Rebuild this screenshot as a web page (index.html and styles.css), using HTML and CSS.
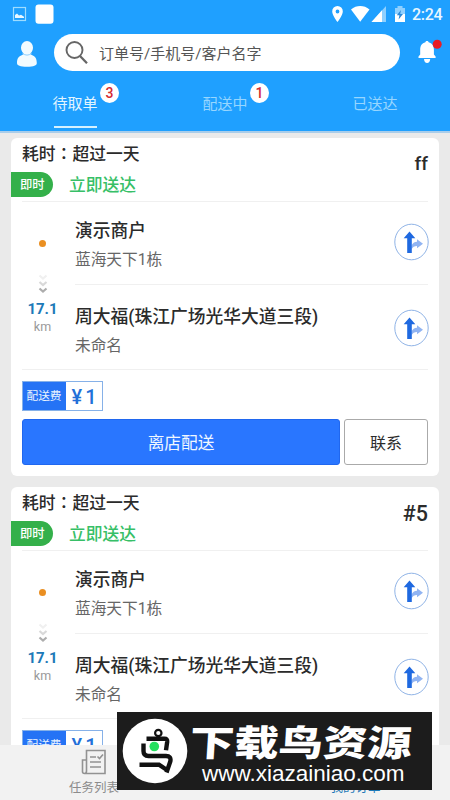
FILE: index.html
```html
<!DOCTYPE html>
<html lang="zh-CN">
<head>
<meta charset="utf-8">
<title>待取单</title>
<link rel="stylesheet" href="styles.css">
</head>
<body>
<svg width="0" height="0" class="defs">
  <symbol id="route" viewBox="0 0 36 38">
    <ellipse cx="17.500" cy="19" rx="16.7" ry="17.8" fill="#fff" stroke="#8fb3e6" stroke-width="1"/>
    <path d="M17.500 26.500V23c1-3 3-4 5.500-4.200v-2.600l6 4.600-6 4.400v-2.300c-2.500 0-4.500 1-5.500 3.600z" fill="#91b4f2"/>
    <path d="M15.500 8.500l5.800 6.700h-3.500v14.700h-4.600V15.200H9.700z" fill="#1f69e0"/>
  </symbol>
  <symbol id="chevs" viewBox="0 0 10 24">
    <g fill="none" stroke-width="2.200">
      <path d="M1.500 1.500L5 4.500l3.500-3" stroke="#f0f0f0"/>
      <path d="M1.500 8L5 11l3.500-3" stroke="#d9d9d9"/>
      <path d="M1.500 14.500L5 17.500l3.500-3" stroke="#adadad"/>
    </g>
  </symbol>
</svg>
<div class="screen">
  <header class="top">
    <div class="status">
      <svg width="56" height="26" viewBox="0 0 56 26">
        <rect x="13.500" y="7.500" width="12" height="13" fill="none" stroke="#9edcff" stroke-width="1.200"/>
        <path d="M15 18v-3l2-1.500 2 2 2-.8 3 2V18z" fill="#e8f7ff"/>
        <rect x="35.500" y="4.500" width="18" height="19.300" rx="3" fill="#fff"/>
      </svg>
      <svg class="status-right" width="78" height="26" viewBox="330 0 78 26">
        <path fill-rule="evenodd" d="M337.500 6a5.300 5.300 0 0 0-5.300 5.400c0 4 5.300 10.600 5.300 10.600s5.300-6.600 5.300-10.600A5.300 5.300 0 0 0 337.500 6zm0 3.600a1.900 1.900 0 1 1 0 3.800 1.900 1.900 0 0 1 0-3.800z" fill="#fff"/>
        <path d="M351 9.500c5.500-4.600 13-4.600 18.500 0L360.200 21.800z" fill="#fff"/>
        <path d="M386 6v16h-14.500z" fill="#8fd0ff"/><path d="M382 10.300V22h-10.500z" fill="#fff"/>
        <path d="M397.500 6h5v2h2.500v14h-10V8h2.500z" fill="#8fd0ff"/>
        <path d="M395 14h10v8h-10z" fill="#fff"/>
        <path d="M401 10l-4.200 5.300h2.600l-.8 4.200 4.400-5.500h-2.800z" fill="#2b89d8"/>
      </svg>
      <span class="clock">2:24</span>
    </div>
    <div class="searchbar">
      <svg class="user" width="22" height="28" viewBox="0 0 22 28">
        <path d="M11 1a6 6.500 0 0 1 6 6.500c0 2.500-1 4.500-2.500 5.700 0 1 .6 1.500 1.800 2 2.700 1 4.500 3.300 4.500 7.800 0 2.500-3 3.700-9.800 3.700S1 25.500 1 23c0-4.500 1.800-6.800 4.700-7.800 1.200-.5 1.800-1 1.800-2C6 12 5 10 5 7.500A6 6.500 0 0 1 11 1z" fill="#f2fbff"/>
        <path d="M6.500 13.500q4.500 3.200 9 0" fill="none" stroke="#8ccfff" stroke-width="1"/>
      </svg>
      <div class="search">
        <svg width="24" height="25" viewBox="0 0 24 25" fill="none" stroke="#666">
          <circle cx="9.500" cy="10" r="8" stroke-width="1.900"/><path d="M15 16l7 7.200" stroke-width="2.300"/>
        </svg>
        <span>订单号/手机号/客户名字</span>
      </div>
      <svg class="bell" width="26" height="28" viewBox="0 0 26 28">
        <path d="M10 3c.9 0 1.400.5 1.600 1.300 3.600.8 5.300 3.700 5.300 7.200v5l1.700 2v1.500H1.500v-1.500l1.700-2v-5c0-3.500 1.700-6.400 5.200-7.200C8.600 3.500 9.100 3 10 3zM7 21h6.200c-.2 2.800-1.300 4-3.100 4S7.200 23.800 7 21z" fill="#fff"/>
        <circle cx="20.200" cy="6.300" r="4.500" fill="#ea1c24"/>
      </svg>
    </div>
    <nav class="tabs">
      <div class="tab on"><span>待取单</span><i class="badge">3</i></div>
      <div class="tab"><span>配送中</span><i class="badge">1</i></div>
      <div class="tab"><span>已送达</span></div>
    </nav>
  </header>

  <main class="list">
    <article class="card">
      <div class="head">
        <div class="time">耗时<span class="colon" lang="zh-TW">：</span>超过一天</div>
        <div class="instant"><span class="tag">即时</span><span class="now">立即送达</span></div>
        <div class="num">ff</div>
      </div>
      <div class="route">
        <div class="rail">
          <span class="dot"></span>
          <svg class="chev" width="10" height="24"><use href="#chevs"/></svg>
          <b>17.1</b><span class="km">km</span>
        </div>
        <div class="stops">
          <div class="stop"><div><h3>演示商户</h3><p>蓝海天下1栋</p></div><svg width="36" height="38"><use href="#route"/></svg></div>
          <div class="stop"><div><h3>周大福(珠江广场光华大道三段)</h3><p>未命名</p></div><svg width="36" height="38"><use href="#route"/></svg></div>
        </div>
      </div>
      <div class="fee"><span class="fee-label">配送费</span><span class="fee-val">¥<em>1</em></span></div>
      <div class="actions"><button class="go">离店配送</button><button class="call">联系</button></div>
    </article>

    <article class="card">
      <div class="head">
        <div class="time">耗时<span class="colon" lang="zh-TW">：</span>超过一天</div>
        <div class="instant"><span class="tag">即时</span><span class="now">立即送达</span></div>
        <div class="num big">#5</div>
      </div>
      <div class="route">
        <div class="rail">
          <span class="dot"></span>
          <svg class="chev" width="10" height="24"><use href="#chevs"/></svg>
          <b>17.1</b><span class="km">km</span>
        </div>
        <div class="stops">
          <div class="stop"><div><h3>演示商户</h3><p>蓝海天下1栋</p></div><svg width="36" height="38"><use href="#route"/></svg></div>
          <div class="stop"><div><h3>周大福(珠江广场光华大道三段)</h3><p>未命名</p></div><svg width="36" height="38"><use href="#route"/></svg></div>
        </div>
      </div>
      <div class="fee"><span class="fee-label">配送费</span><span class="fee-val">¥<em>1</em></span></div>
    </article>
  </main>

  <footer class="bottom">
    <div class="item">
      <svg width="26" height="26" viewBox="0 0 26 26" fill="none" stroke="#929292" stroke-width="1.600">
        <path d="M5.500 1.500h18.500v23H3.500q-2 0-2-2V11h4zM5.500 11v11q0 2.500-2 2.500"/>
        <path d="M9 8h6M9 13h11M9 18h11"/><path d="M16.500 7.500l2 2 3.500-4"/>
      </svg>
      <span>任务列表</span>
    </div>
    <div class="item on"><span>我的订单</span></div>
  </footer>

  <div class="mark">
    <svg width="66" height="66" viewBox="0 0 66 66">
      <circle cx="33" cy="33" r="32.300" fill="#fff"/>
      <g fill="none" stroke="#111" stroke-width="4.400">
        <circle cx="36.300" cy="15" r="3.200" stroke-width="2.200"/>
        <path d="M24.500 20.800h18q3 0 2.700 3l-1.200 8.500"/>
        <path d="M21.500 25.500V33q0 5 5 5h17.500q5.500 0 4.300 5.500L44.500 54.500"/>
        <path d="M17.500 46.700H37l8 5.300"/>
      </g>
      <circle cx="32.300" cy="28.500" r="4.800" fill="#25e05f"/>
    </svg>
    <div class="mark-text"><strong>下载鸟资源</strong><span>www.xiazainiao.com</span></div>
  </div>
</div>
</body>
</html>
```
FILE: styles.css
```css
* { box-sizing: border-box; margin: 0; padding: 0; }
body {
  font-family: Roboto, "Noto Sans CJK SC", sans-serif;
  color: #2b2b2b;
  background: #eaeaea;
}
.defs { position: absolute; }
svg { display: block; flex: none; }
.screen {
  position: relative;
  width: 450px;
  height: 800px;
  overflow: hidden;
  display: flex;
  flex-direction: column;
}

.top { height: 133px; flex: none; background: #1fa0ff; border-bottom: 2px solid #a9cdea; }
.status { display: flex; align-items: center; height: 28px; padding-right: 9px; }
.status svg { margin-bottom: 2px; }
.status-right { margin-left: auto; }
.clock { width: 29px; margin-left: 4px; font-size: 16px; font-weight: 500; color: #e8f7ff; white-space: nowrap; letter-spacing: -0.3px; }

.searchbar { display: flex; align-items: center; height: 48px; padding-left: 16px; }
.user { margin-top: 3px; }
.search {
  display: flex;
  align-items: center;
  gap: 10.500px;
  width: 346px;
  height: 37px;
  margin-left: 15.500px;
  padding-left: 11px;
  border-radius: 19px;
  background: #fff;
  color: #555;
  font-size: 15px;
}
.bell { margin-left: 17px; }

.tabs { display: flex; padding-top: 13px; }
.tab { position: relative; width: 150px; height: 40px; text-align: center; font-size: 15px; line-height: 31px; color: #97d6ff; }
.tab.on { color: #e2f5ff; }
.tab.on span { display: inline-block; width: 43px; height: 39px; border-bottom: 2px solid #d5f1ff; text-indent: -1px; white-space: nowrap; }
.badge {
  position: absolute;
  left: 100px;
  top: -6px;
  width: 19px;
  height: 20px;
  border-radius: 50%;
  background: #fff;
  color: #d42a31;
  font-size: 14px;
  font-style: normal;
  font-weight: 500;
  line-height: 21px;
}

.list { display: flex; flex-direction: column; gap: 11px; padding: 5px 11px 0; }
.card { height: 338px; flex: none; border-radius: 6px; background: #fff; padding: 0 11px; }
.head { position: relative; height: 64px; border-bottom: 1px solid #f0f0f0; padding-top: 4px; }
.time { height: 24px; line-height: 24px; font-size: 16.800px; font-weight: 500; }
.colon { font-family: "Noto Sans CJK TC", sans-serif; line-height: 1; }
.instant { display: flex; align-items: center; margin: 6px 0 0 -11px; height: 25px; }
.tag { width: 42px; height: 25px; padding-left: 9px; border-radius: 0 13px 13px 0; background: #34b04a; color: #fff; font-size: 12.300px; font-weight: 500; line-height: 26px; }
.now { margin-left: 16px; color: #37bf67; font-size: 16.800px; font-weight: 500; line-height: 25px; padding-top: 2px; }
.num { position: absolute; right: 0; top: 14px; font-size: 19px; font-weight: 500; line-height: 24px; }
.num.big { font-size: 21.500px; top: 15px; }

.route { display: flex; border-bottom: 1px solid #f0f0f0; height: 168px; }
.rail { width: 41px; display: flex; flex-direction: column; align-items: center; }
.dot { width: 7px; height: 7px; margin-top: 38px; border-radius: 50%; background: #ea8f22; }
.chev { margin-top: 27px; }
.rail b { margin-top: 1px; font-size: 15px; line-height: 20px; font-weight: 700; color: #1d79b8; }
.km { color: #999; font-size: 12.500px; line-height: 17px; margin-top: -1px; }
.stops { flex: 1; padding-left: 12px; }
.stop { display: flex; align-items: flex-start; justify-content: space-between; height: 82px; padding-top: 14px; }
.stop svg { margin: 7px -2px 0 0; }
.stop + .stop { border-top: 1px solid #f0f0f0; height: 85px; padding-top: 17px; }
.stop + .stop svg { margin-top: 7px; }
.stop h3 { font-size: 17.750px; font-weight: 500; line-height: 30px; white-space: nowrap; }
.stop p { font-size: 15.700px; line-height: 28px; color: #666; }

.fee { display: flex; width: 81px; height: 30px; margin-top: 11px; margin-left: -0.500px; border: 1px solid #86b1e8; }
.fee-label { width: 43px; background: #2573f5; color: #eaf4ff; font-size: 11.700px; line-height: 29px; text-align: center; }
.fee-val { flex: 1; padding-left: 6px; color: #2370d8; font-size: 20px; font-weight: 500; line-height: 30px; white-space: nowrap; }
.fee-val em { font-style: normal; margin-left: 3px; }
.actions { display: flex; gap: 4px; margin-top: 8px; }
.actions button { height: 46px; border-radius: 3px; font-family: inherit; }
.go { width: 318px; border: 1px solid #2067ef; background: #2976ff; color: #f0f7ff; font-size: 16.700px; }
.call { width: 84px; border: 1px solid #aaa; background: #fff; color: #2b2b2b; font-size: 16px; }

.bottom { position: absolute; left: 0; right: 0; bottom: 0; height: 55px; display: flex; background: #f2f2f2; }
.item { flex: none; width: 188px; display: flex; flex-direction: column; align-items: center; justify-content: flex-end; padding-bottom: 3px; font-size: 12.500px; line-height: 19px; color: #8c8c8c; }
.item svg { margin-bottom: 3px; }
.item.on { width: 262px; padding-left: 73px; color: #1d79b8; }

.mark { position: absolute; left: 117px; top: 712px; width: 315px; height: 78px; padding-left: 5px; display: flex; align-items: center; background: #1c1c1c; color: #fff; }
.mark-text { display: flex; flex-direction: column; width: 230px; margin-left: 2px; }
.mark-text strong { font-family: "Noto Sans CJK SC", sans-serif; font-size: 37px; font-weight: 900; line-height: 42px; white-space: nowrap; transform: translateY(1px) scale(1.200, 0.970) skewX(-3deg); transform-origin: 0 50%; }
.mark-text span { margin: 2px 0 -2px 12px; font-family: "Liberation Sans", sans-serif; font-size: 22.500px; line-height: 24px; }
```
